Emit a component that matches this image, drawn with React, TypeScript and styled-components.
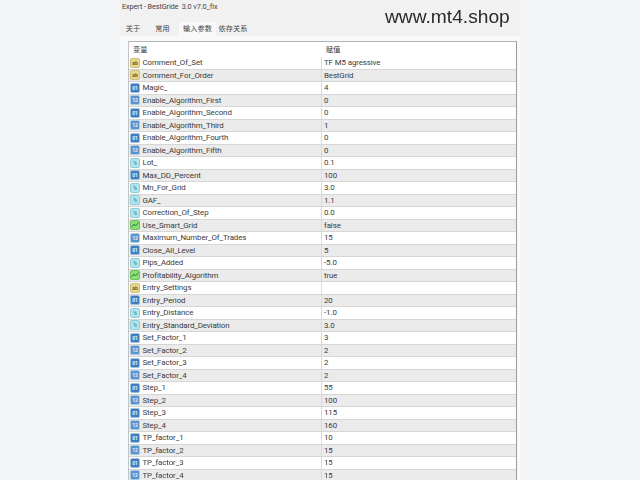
import React from 'react'
import styled, { createGlobalStyle } from 'styled-components'

type Kind = 'ab' | 'int' | 'lint' | 'dbl' | 'bool'

const GlobalStyle = createGlobalStyle`
  html, body {
    margin: 0;
    padding: 0;
    background: #f3f5f7;
  }
`

const Page = styled.div`
  display: flex;
  justify-content: center;
  width: 640px;
  height: 480px;
  overflow: hidden;
  position: relative;
  background: #f3f5f7;
  font-family: Roboto, "Noto Sans CJK SC", sans-serif;
  color: #3a3a3a;
`

const Dialog = styled.div`
  width: 400px;
  height: 480px;
  flex: none;
  display: flex;
  flex-direction: column;
  background: #f8f9fa;
  filter: blur(0.4px);
`

const Top = styled.div`
  height: 36px;
  flex: none;
  display: flex;
  flex-direction: column;
  background: #f1f1f2;
`

const Title = styled.div`
  height: 22px;
  padding: 2px 0 0 2px;
  box-sizing: border-box;
  font-size: 7.3px;
  letter-spacing: -0.1px;
  line-height: 10px;
  color: #444;
`

const Tabs = styled.div`
  display: flex;
  height: 14px;
`

const Tab = styled.div<{ $active?: boolean; $w: number }>`
  width: ${p => p.$w}px;
  height: 14px;
  text-align: center;
  font-size: 7.2px;
  line-height: 14px;
  color: #444;
  background: ${p => (p.$active ? '#f9f9f9' : 'transparent')};
`

const Table = styled.div`
  margin: 5px 0 0 8px;
  width: 389px;
  flex: 1;
  box-sizing: border-box;
  background: #fff;
  border-top: 1px solid #b4b4b4;
  border-left: 1px solid #c4c4c4;
  border-right: 1px solid #9c9c9c;
`

const HeaderRow = styled.div`
  display: grid;
  grid-template-columns: 193px 1fr;
  height: 15px;
  font-size: 7.2px;
  line-height: 15px;
  color: #333;
`

const HeaderCell = styled.div`
  padding-left: 4px;
`

const Row = styled.div<{ $odd: boolean }>`
  display: grid;
  grid-template-columns: 193px 1fr;
  height: 12.5px;
  box-sizing: border-box;
  background: ${p => (p.$odd ? '#ebebeb' : '#fff')};
  border-bottom: 1px solid #d6d6d6;
  font-size: 7.9px;
  letter-spacing: -0.1px;
  line-height: 11px;
  white-space: nowrap;
`

const NameCell = styled.div`
  display: flex;
  align-items: flex-start;
  gap: 2.5px;
  padding-left: 1px;
  border-right: 1px solid #d9d9d9;
`

const ValueCell = styled.div`
  padding-left: 2px;
`

const iconColours: Record<Kind, { bg: string; border: string; fg: string }> = {
  ab: { bg: '#e8d88f', border: '#cfc07a', fg: '#7a5a10' },
  int: { bg: '#3f7cc0', border: '#9cc0e0', fg: '#e8f2fb' },
  lint: { bg: '#5a93cc', border: '#a9cbe6', fg: '#e8f2fb' },
  dbl: { bg: '#b4e4ea', border: '#8ccfda', fg: '#2d8a9c' },
  bool: { bg: '#8fdc7c', border: '#6cc35a', fg: '#1f8a2a' },
}

const IconBox = styled.span<{ $kind: Kind }>`
  flex: none;
  display: flex;
  align-items: center;
  justify-content: center;
  width: 10px;
  height: 10px;
  margin-top: 0.5px;
  box-sizing: border-box;
  border-radius: 2px;
  font-size: 5px;
  line-height: 8px;
  font-weight: 700;
  letter-spacing: 0;
  overflow: hidden;
  background: ${p => iconColours[p.$kind].bg};
  border: 1px solid ${p => iconColours[p.$kind].border};
  color: ${p => iconColours[p.$kind].fg};
`

const Watermark = styled.div`
  position: absolute;
  left: 385px;
  top: 4px;
  font-family: "Liberation Sans", Arial, sans-serif;
  font-size: 19.2px;
  line-height: 25px;
  color: #2a2a2a;
  white-space: nowrap;
`

const BoolMark = () => (
  <svg width="8" height="8" viewBox="0 0 8 8" fill="none" stroke="#1f8a2a" strokeWidth="1">
    <path d="M0.5 6 L3 3 L4.5 5 L7.5 1.5" />
  </svg>
)

const iconLabel: Record<Kind, string> = {
  ab: 'ab',
  int: '01',
  lint: '12',
  dbl: '½',
  bool: '',
}

const params: [string, string, Kind][] = [
  ['Comment_Of_Set', 'TF M5 agressive', 'ab'],
  ['Comment_For_Order', 'BestGrid', 'ab'],
  ['Magic_', '4', 'int'],
  ['Enable_Algorithm_First', '0', 'lint'],
  ['Enable_Algorithm_Second', '0', 'int'],
  ['Enable_Algorithm_Third', '1', 'lint'],
  ['Enable_Algorithm_Fourth', '0', 'int'],
  ['Enable_Algorithm_Fifth', '0', 'lint'],
  ['Lot_', '0.1', 'dbl'],
  ['Max_DD_Percent', '100', 'int'],
  ['Mn_For_Grid', '3.0', 'dbl'],
  ['GAF_', '1.1', 'dbl'],
  ['Correction_Of_Step', '0.0', 'dbl'],
  ['Use_Smart_Grid', 'false', 'bool'],
  ['Maximum_Number_Of_Trades', '15', 'lint'],
  ['Close_All_Level', '5', 'int'],
  ['Pips_Added', '-5.0', 'dbl'],
  ['Profitability_Algorithm', 'true', 'bool'],
  ['Entry_Settings', '', 'ab'],
  ['Entry_Period', '20', 'int'],
  ['Entry_Distance', '-1.0', 'dbl'],
  ['Entry_Standard_Deviation', '3.0', 'dbl'],
  ['Set_Factor_1', '3', 'int'],
  ['Set_Factor_2', '2', 'lint'],
  ['Set_Factor_3', '2', 'int'],
  ['Set_Factor_4', '2', 'lint'],
  ['Step_1', '55', 'int'],
  ['Step_2', '100', 'lint'],
  ['Step_3', '115', 'int'],
  ['Step_4', '160', 'lint'],
  ['TP_factor_1', '10', 'int'],
  ['TP_factor_2', '15', 'lint'],
  ['TP_factor_3', '15', 'int'],
  ['TP_factor_4', '15', 'lint'],
]

const App = () => {
  return (
    <Page>
      <GlobalStyle />
      <Dialog>
        <Top>
          <Title>Expert - BestGride&nbsp; 3.0 v7.0_fix</Title>
          <Tabs>
            <Tab $w={26}>关于</Tab>
            <Tab $w={33}>常用</Tab>
            <Tab $w={37} $active>输入参数</Tab>
            <Tab $w={34}>依存关系</Tab>
          </Tabs>
        </Top>
        <Table>
          <HeaderRow>
            <HeaderCell>变量</HeaderCell>
            <HeaderCell>赋值</HeaderCell>
          </HeaderRow>
          {params.map(([name, value, kind], i) => (
            <Row key={name} $odd={i % 2 === 1}>
              <NameCell>
                <IconBox $kind={kind}>{kind === 'bool' ? <BoolMark /> : iconLabel[kind]}</IconBox>
                {name}
              </NameCell>
              <ValueCell>{value}</ValueCell>
            </Row>
          ))}
        </Table>
      </Dialog>
      <Watermark>www.mt4.shop</Watermark>
    </Page>
  )
}

export default App
